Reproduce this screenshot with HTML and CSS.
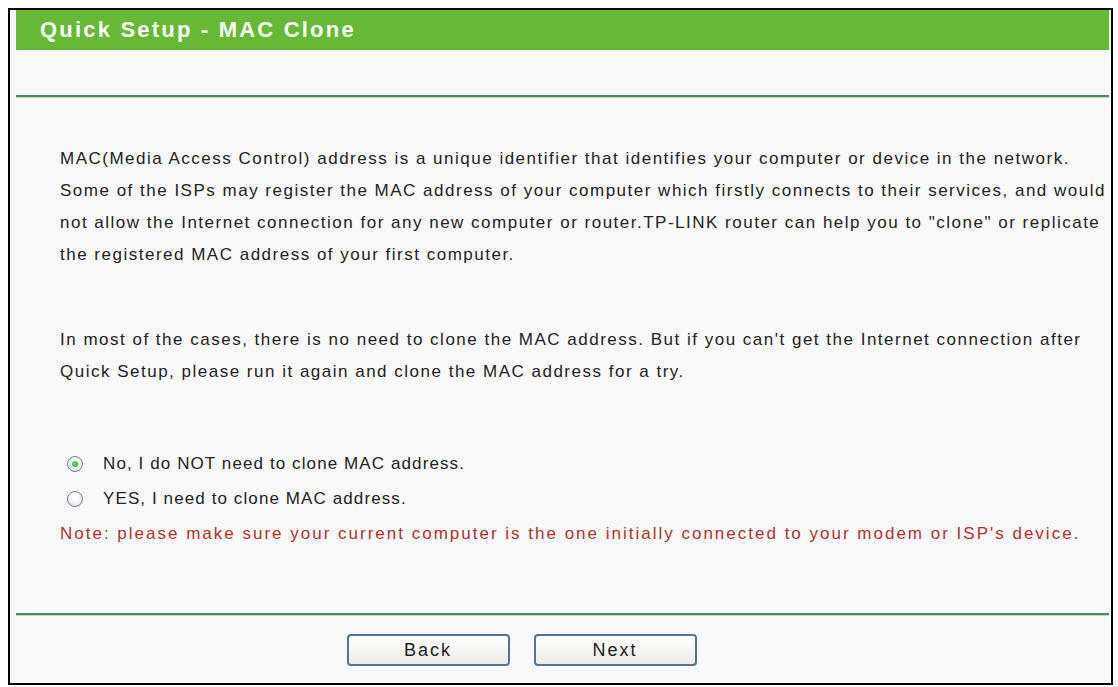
FILE: index.html
```html
<!DOCTYPE html>
<html>
<head>
<meta charset="utf-8">
<link rel="stylesheet" href="styles.css">
</head>
<body>
<div class="frame">
  <div class="title">Quick Setup - MAC Clone</div>
  <div class="blank"></div>
  <div class="sep"></div>
  <div class="content">
    <p class="para">MAC(Media Access Control) address is a unique identifier that identifies your computer or device in the network.<br>Some of the ISPs may register the MAC address of your computer which firstly connects to their services, and would<br>not allow the Internet connection for any new computer or router.TP-LINK router can help you to "clone" or replicate<br>the registered MAC address of your first computer.</p>
    <p class="para para2">In most of the cases, there is no need to clone the MAC address. But if you can't get the Internet connection after<br>Quick Setup, please run it again and clone the MAC address for a try.</p>
    <div class="options">
      <label class="opt"><span class="radio checked"><span class="dot"></span></span>No, I do NOT need to clone MAC address.</label>
      <label class="opt"><span class="radio"></span>YES, I need to clone MAC address.</label>
      <div class="note">Note: please make sure your current computer is the one initially connected to your modem or ISP's device.</div>
    </div>
  </div>
  <div class="sep sep2"></div>
  <div class="buttons">
    <button class="btn">Back</button>
    <button class="btn">Next</button>
  </div>
</div>
</body>
</html>
```
FILE: styles.css
```css
html, body {
  margin: 0;
  padding: 0;
  background: #ffffff;
}
body {
  padding: 8px;
  font-family: "Liberation Sans", Arial, sans-serif;
  color: #222;
}
.frame {
  width: 1093px;
  height: 673px;
  border: 2px solid #000;
  background: #f9f9f9;
  padding: 0 2px 0 6px;
  display: flex;
  flex-direction: column;
}
.title {
  height: 40px;
  background: #67b834;
  color: #fff;
  font-weight: bold;
  font-size: 22px;
  letter-spacing: 2.2px;
  line-height: 40px;
  padding-left: 24px;
}
.blank {
  height: 45px;
}
.sep {
  height: 2px;
  background: #4e8b62;
  border-bottom: 1px solid #b8d8c2;
}
.content {
  padding-left: 44px;
  padding-top: 45px;
  font-size: 17px;
  letter-spacing: 1.5px;
}
.para {
  margin: 0;
  line-height: 32px;
  white-space: nowrap;
}
.para2 {
  margin-top: 53px;
}
.options {
  margin-top: 58px;
}
.opt {
  display: flex;
  align-items: center;
  height: 35px;
  padding-left: 7px;
  letter-spacing: 1.1px;
}
.radio {
  width: 14px;
  height: 14px;
  border: 1px solid #6e7f96;
  border-radius: 50%;
  background: radial-gradient(circle at 50% 35%, #ffffff 20%, #d9dde3);
  margin-right: 20px;
  display: flex;
  align-items: center;
  justify-content: center;
  flex: none;
}
.dot {
  width: 6px;
  height: 6px;
  border-radius: 50%;
  background: radial-gradient(circle at 45% 40%, #6fe06f, #1f9a2a);
}
.note {
  height: 35px;
  line-height: 35px;
  color: #b3302e;
  letter-spacing: 2px;
}
.sep2 {
  margin-top: 62px;
}
.buttons {
  display: flex;
  justify-content: center;
  gap: 24px;
  padding-top: 18px;
  padding-right: 82px;
}
.btn {
  width: 163px;
  height: 32px;
  border: 2px solid #56738f;
  border-radius: 4px;
  background: linear-gradient(#ffffff, #ecebe6);
  font-family: "Liberation Sans", Arial, sans-serif;
  font-size: 18px;
  letter-spacing: 2px;
  color: #222;
  padding: 0;
}
```
